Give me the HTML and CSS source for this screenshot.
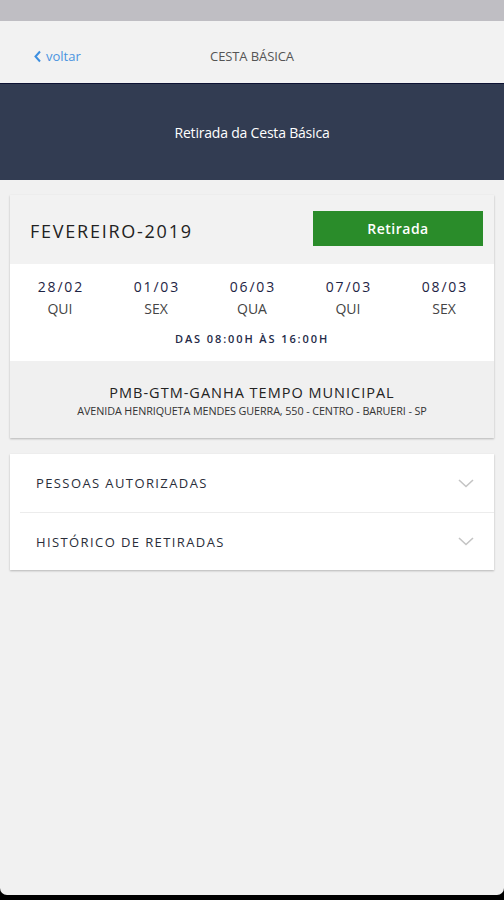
FILE: index.html
```html
<!DOCTYPE html>
<html lang="pt-BR">
  <head>
    <meta charset="UTF-8" />
    <meta name="viewport" content="width=device-width, initial-scale=1.0" />
    <title>Cesta Básica</title>
    <link rel="stylesheet" href="styles.css">
  </head>
  <body>
    <div class="screen">
      <div class="status-bar"></div>

      <!-- Nav -->
      <div class="nav">
        <a class="back" href="#">
          <svg width="9" height="13" viewBox="0 0 9 13"><path d="M7 1.5 L2.5 6.5 L7 11.5" fill="none" stroke="#3d8fe0" stroke-width="2"/></svg>
          <span>voltar</span>
        </a>
        <div class="nav-title">CESTA BÁSICA</div>
      </div>

      <!-- Banner -->
      <div class="banner">Retirada da Cesta Básica</div>

      <div class="content">
        <div class="card">
          <div class="card-header">
            <div class="month">FEVEREIRO-2019</div>
            <button class="btn-retirada">Retirada</button>
          </div>
          <div class="dates">
            <div class="date-list">
              <div class="date"><span class="day-num">28/02</span><span class="day-name">QUI</span></div>
              <div class="date"><span class="day-num">01/03</span><span class="day-name">SEX</span></div>
              <div class="date"><span class="day-num">06/03</span><span class="day-name">QUA</span></div>
              <div class="date"><span class="day-num">07/03</span><span class="day-name">QUI</span></div>
              <div class="date"><span class="day-num">08/03</span><span class="day-name">SEX</span></div>
            </div>
            <div class="hours">DAS 08:00H ÀS 16:00H</div>
          </div>
          <div class="place">
            <div class="place-name">PMB-GTM-GANHA TEMPO MUNICIPAL</div>
            <div class="place-address">AVENIDA HENRIQUETA MENDES GUERRA, 550 - CENTRO - BARUERI - SP</div>
          </div>
        </div>

        <div class="card accordion">
          <div class="acc-row">
            <span>PESSOAS AUTORIZADAS</span>
            <svg width="16" height="9" viewBox="0 0 16 9"><path d="M1 1 L8 7.5 L15 1" fill="none" stroke="#c4c4c4" stroke-width="1.6"/></svg>
          </div>
          <div class="acc-row">
            <span>HISTÓRICO DE RETIRADAS</span>
            <svg width="16" height="9" viewBox="0 0 16 9"><path d="M1 1 L8 7.5 L15 1" fill="none" stroke="#c4c4c4" stroke-width="1.6"/></svg>
          </div>
        </div>
      </div>
    </div>
  </body>
</html>
```

FILE: styles.css
```css
* {
  margin: 0;
  padding: 0;
  box-sizing: border-box;
}

body {
  font-family: "Open Sans", "Noto Sans", sans-serif;
  background: #000;
  height: 900px;
  overflow: hidden;
}

.screen {
  height: 895px;
  background: #f1f1f1;
  border-radius: 0 0 7px 7px;
  display: flex;
  flex-direction: column;
}

.status-bar {
  height: 21px;
  background: #bfbec3;
}

/* Nav */
.nav {
  height: 62px;
  background: #f2f2f2;
  display: flex;
  align-items: center;
  justify-content: center;
  position: relative;
}

.back {
  position: absolute;
  left: 33px;
  top: 26px;
  display: flex;
  align-items: center;
  gap: 4px;
  color: #4a94e0;
  text-decoration: none;
  font-size: 13px;
}

.nav-title {
  font-size: 13px;
  color: #555;
  letter-spacing: -0.1px;
  margin-top: 7px;
}

/* Banner */
.banner {
  height: 97px;
  background: #323c52;
  border-top: 1px solid #0d1233;
  color: #fff;
  font-size: 14px;
  letter-spacing: -0.2px;
  display: flex;
  align-items: center;
  justify-content: center;
}

.content {
  padding: 15px 10px;
  display: flex;
  flex-direction: column;
  gap: 16px;
}

.card {
  background: #fff;
  box-shadow: 0 1px 2px rgba(0, 0, 0, 0.25);
}

.card-header {
  height: 69px;
  background: #f2f2f2;
  display: flex;
  align-items: center;
  justify-content: space-between;
  padding: 0 11px 0 20px;
}

.month {
  font-size: 18px;
  color: #222;
  letter-spacing: 1.75px;
  margin-top: 3px;
}

.btn-retirada {
  width: 170px;
  height: 35px;
  border: none;
  background: #2a8c2a;
  color: #fff;
  font-family: inherit;
  font-size: 14px;
  font-weight: 600;
  letter-spacing: 0.5px;
  margin-top: -2px;
}

.dates {
  height: 97px;
  padding: 12px 2px 0;
}

.date-list {
  display: grid;
  grid-template-columns: repeat(5, 1fr);
}

.date {
  display: flex;
  flex-direction: column;
  align-items: center;
  line-height: 22px;
}

.day-num {
  font-size: 14px;
  color: #1e2444;
  letter-spacing: 1.8px;
  margin-right: -1.8px;
}

.day-name {
  font-size: 14px;
  color: #444;
}

.hours {
  text-align: center;
  font-size: 11px;
  font-weight: 600;
  color: #252b48;
  letter-spacing: 1.9px;
  margin-top: 11px;
}

.place {
  height: 77px;
  background: #f0f0f0;
  text-align: center;
  padding-top: 22px;
}

.place-name {
  font-size: 14.5px;
  color: #222;
  letter-spacing: 1px;
  line-height: 20px;
}

.place-address {
  font-size: 10.8px;
  color: #333;
  letter-spacing: -0.1px;
}

/* Accordion */
.accordion {
  padding-left: 10px;
}

.acc-row {
  height: 58px;
  display: flex;
  align-items: center;
  justify-content: space-between;
  padding: 0 20px 0 16px;
  font-size: 13px;
  color: #2a2e3a;
  letter-spacing: 1.4px;
}

.acc-row + .acc-row {
  border-top: 1px solid #ececec;
}
```
